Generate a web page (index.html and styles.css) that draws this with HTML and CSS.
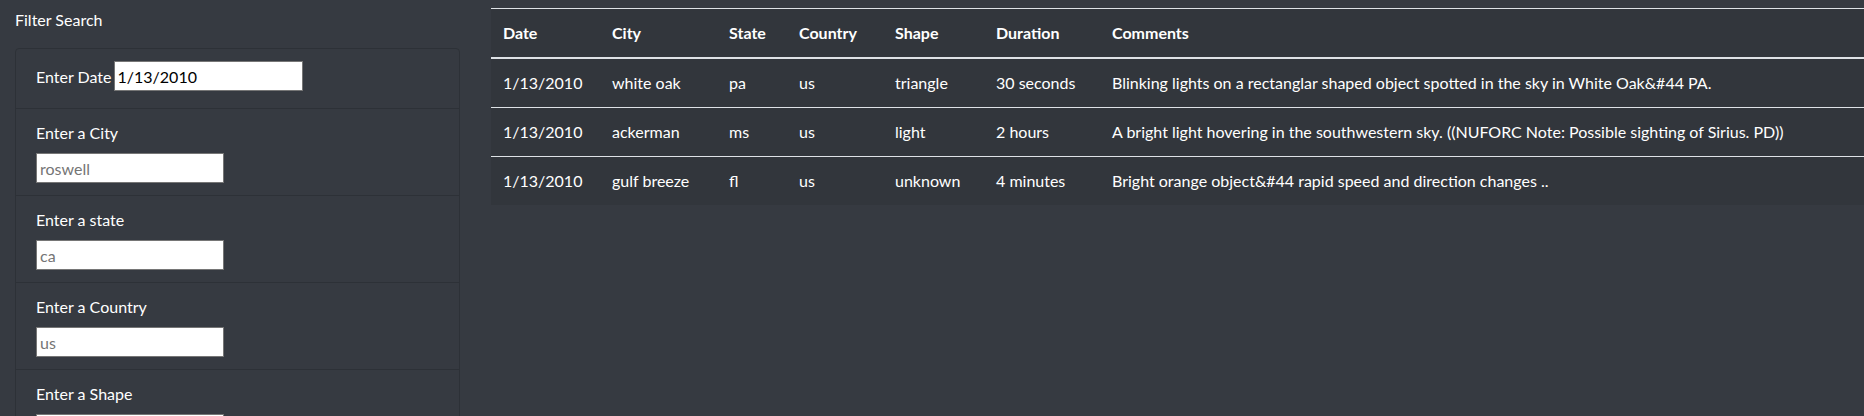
FILE: index.html
```html
<!DOCTYPE html>
<html lang="en">
<head>
<meta charset="utf-8">
<title>UFO Sightings</title>
<link rel="stylesheet" href="styles.css">
</head>
<body>
<div class="page">
  <aside class="sidebar">
    <h2 class="filter-title">Filter Search</h2>
    <ul class="filters">
      <li class="filter filter-inline">
        <label class="filter-label" for="datetime">Enter Date</label>
        <input class="filter-input" id="datetime" type="text" value="1/13/2010">
      </li>
      <li class="filter">
        <label class="filter-label" for="city">Enter a City</label>
        <input class="filter-input" id="city" type="text" placeholder="roswell">
      </li>
      <li class="filter">
        <label class="filter-label" for="state">Enter a state</label>
        <input class="filter-input" id="state" type="text" placeholder="ca">
      </li>
      <li class="filter">
        <label class="filter-label" for="country">Enter a Country</label>
        <input class="filter-input" id="country" type="text" placeholder="us">
      </li>
      <li class="filter">
        <label class="filter-label" for="shape">Enter a Shape</label>
        <input class="filter-input" id="shape" type="text" placeholder="circle">
      </li>
    </ul>
  </aside>
  <main class="results">
    <table class="ufo-table">
      <thead>
        <tr>
          <th class="col-date">Date</th>
          <th class="col-city">City</th>
          <th class="col-state">State</th>
          <th class="col-country">Country</th>
          <th class="col-shape">Shape</th>
          <th class="col-duration">Duration</th>
          <th class="col-comments">Comments</th>
        </tr>
      </thead>
      <tbody>
        <tr>
          <td>1/13/2010</td>
          <td>white oak</td>
          <td>pa</td>
          <td>us</td>
          <td>triangle</td>
          <td>30 seconds</td>
          <td>Blinking lights on a rectanglar shaped object spotted in the sky in White Oak&amp;#44 PA.</td>
        </tr>
        <tr>
          <td>1/13/2010</td>
          <td>ackerman</td>
          <td>ms</td>
          <td>us</td>
          <td>light</td>
          <td>2 hours</td>
          <td>A bright light hovering in the southwestern sky. ((NUFORC Note: Possible sighting of Sirius. PD))</td>
        </tr>
        <tr>
          <td>1/13/2010</td>
          <td>gulf breeze</td>
          <td>fl</td>
          <td>us</td>
          <td>unknown</td>
          <td>4 minutes</td>
          <td>Bright orange object&amp;#44 rapid speed and direction changes ..</td>
        </tr>
      </tbody>
    </table>
  </main>
</div>
</body>
</html>
```

FILE: styles.css
```css
* {
  box-sizing: border-box;
}

html, body {
  margin: 0;
  padding: 0;
  background: #363a41;
  color: #ffffff;
  font-family: Lato, "Liberation Sans", sans-serif;
  font-size: 16px;
  line-height: 24px;
  overflow: hidden;
}

.page {
  display: flex;
  align-items: flex-start;
  padding-top: 8px;
}

.sidebar {
  flex: 0 0 auto;
  width: 460px;
  padding-left: 15px;
}

.filter-title {
  margin: 0 0 16px 0;
  font-size: 16px;
  font-weight: 400;
  line-height: 24px;
}

.filters {
  list-style: none;
  margin: 0;
  padding: 0;
  border: 1px solid #2d3137;
  border-radius: 4px;
}

.filter {
  padding: 12px 20px;
  border-bottom: 1px solid #2d3137;
  height: 87px;
}

.filter-inline {
  display: flex;
  align-items: flex-start;
  gap: 2px;
  height: 60px;
}

.filter-label {
  display: block;
  margin-bottom: 8px;
  color: #ffffff;
}

.filter-inline .filter-label {
  margin-bottom: 0;
  line-height: 31px;
}

.filter-input {
  display: block;
  width: 188px;
  height: 30px;
  margin: 0;
  padding: 1px 3px;
  border: 1px solid #767676;
  border-radius: 0;
  background: #ffffff;
  color: #000000;
  font-family: inherit;
  font-size: 16px;
}

.filter-inline .filter-input {
  width: 189px;
}

.filter-input::placeholder {
  color: #757575;
}

.results {
  flex: 1 1 auto;
  margin-left: 31px;
  min-width: 0;
}

.ufo-table {
  width: 100%;
  table-layout: fixed;
  border-collapse: collapse;
  background: #32363c;
  color: #ffffff;
}

.ufo-table th,
.ufo-table td {
  padding: 12px;
  border-top: 1px solid #dee2e6;
  text-align: left;
  vertical-align: top;
  white-space: nowrap;
  line-height: 24px;
}

.ufo-table thead th {
  font-weight: 700;
  border-bottom: 2px solid #dee2e6;
}

.ufo-table tbody tr:first-child td {
  border-top: none;
}

.col-date { width: 109px; }
.col-city { width: 117px; }
.col-state { width: 70px; }
.col-country { width: 96px; }
.col-shape { width: 101px; }
.col-duration { width: 116px; }
.col-comments { width: auto; }
```
